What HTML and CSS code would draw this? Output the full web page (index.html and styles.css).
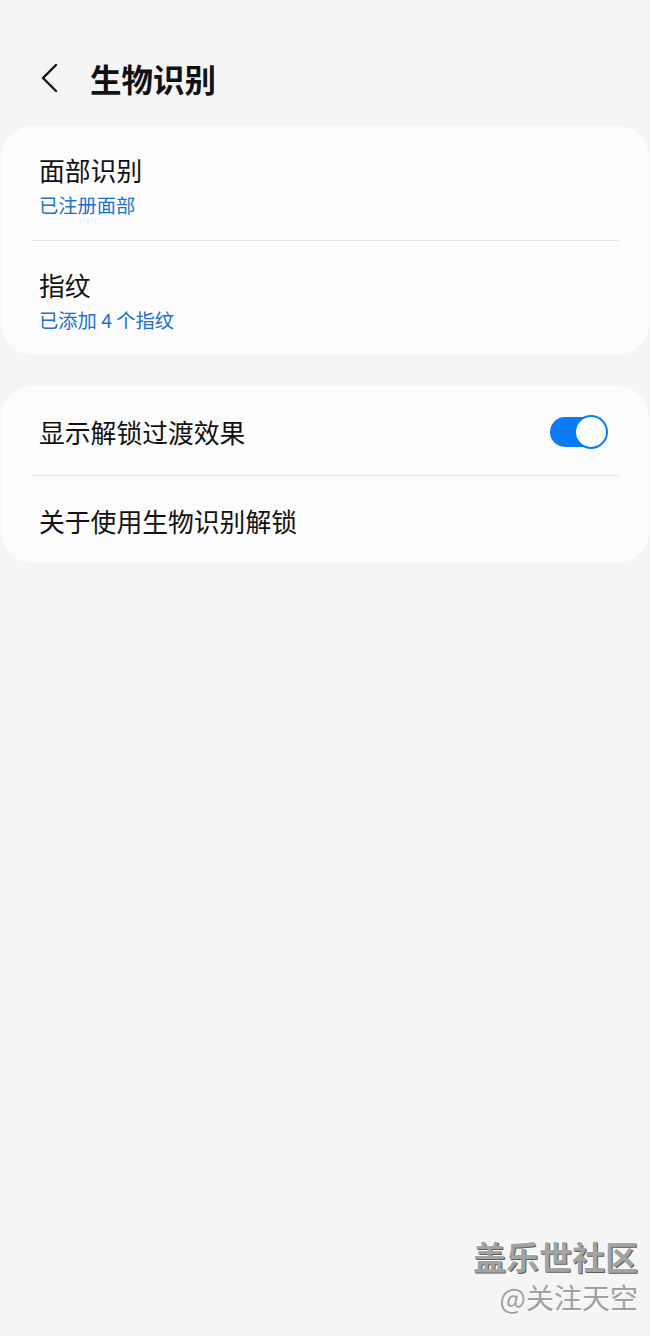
FILE: index.html
```html
<!DOCTYPE html>
<html lang="zh-CN">
<head>
    <meta charset="UTF-8">
    <meta name="viewport" content="width=device-width, initial-scale=1.0">
    <title>生物识别</title>
    <link rel="stylesheet" href="styles.css">
</head>
<body>
    <div class="page">
        <div class="header">
            <svg class="back" width="20" height="30" viewBox="0 0 20 30">
                <path d="M16 2 L3 15 L16 28" fill="none" stroke="#111" stroke-width="2.4" stroke-linecap="round" stroke-linejoin="round"/>
            </svg>
            <h1>生物识别</h1>
        </div>

        <div class="card">
            <div class="item">
                <div class="item-title">面部识别</div>
                <div class="item-sub">已注册面部</div>
            </div>
            <div class="divider"></div>
            <div class="item">
                <div class="item-title">指纹</div>
                <div class="item-sub">已添加 4 个指纹</div>
            </div>
        </div>

        <div class="card">
            <div class="row">
                <div class="item-title">显示解锁过渡效果</div>
                <div class="switch">
                    <div class="track"></div>
                    <div class="knob"></div>
                </div>
            </div>
            <div class="divider"></div>
            <div class="row row-last">
                <div class="item-title">关于使用生物识别解锁</div>
            </div>
        </div>

        <div class="watermark">
            <div class="wm-big">盖乐世社区</div>
            <div class="wm-small">@关注天空</div>
        </div>
    </div>
</body>
</html>
```

FILE: styles.css
```css
body {
    margin: 0;
    background-color: #f5f5f5;
    color: #111;
    font-family: "Noto Sans CJK SC", "Noto Sans", sans-serif;
}
.page {
    position: relative;
    min-height: 1336px;
    padding: 0 1px;
}
.header {
    height: 126px;
    display: flex;
    align-items: center;
    padding-left: 39px;
    padding-top: 30px;
    box-sizing: border-box;
}
.back {
    display: block;
}
h1 {
    margin: 0 0 0 30px;
    font-size: 31.5px;
    font-weight: 700;
    line-height: 40px;
}
.card {
    background-color: #fcfcfc;
    border-radius: 32px;
    margin-bottom: 31px;
}
.item {
    padding: 29px 38px 23px;
}
.item-title {
    font-size: 25.8px;
    line-height: 30px;
}
.item-sub {
    margin-top: 8px;
    font-size: 19.3px;
    line-height: 24px;
    color: #2271c9;
}
.divider {
    height: 1px;
    margin: 0 30px;
    background-color: #e3e3e3;
}
.row {
    height: 89px;
    display: flex;
    align-items: center;
    justify-content: space-between;
    padding: 3px 41px 0 38px;
    box-sizing: border-box;
}
.row-last {
    height: 87px;
}
.switch {
    position: relative;
    width: 58px;
    height: 34px;
}
.track {
    position: absolute;
    left: 0;
    top: 2px;
    width: 50px;
    height: 30px;
    border-radius: 15px;
    background-color: #0b7bf3;
}
.knob {
    position: absolute;
    right: 0;
    top: 0;
    width: 30px;
    height: 30px;
    border-radius: 50%;
    background-color: #fdfdfd;
    border: 2px solid #0b7bf3;
}
.watermark {
    position: absolute;
    right: 12px;
    top: 1234px;
    text-align: right;
}
.wm-big {
    font-size: 33px;
    font-weight: 700;
    line-height: 44px;
    color: #a3a3a3;
    text-shadow: 1px 1px 0 #5c5c5c, -1px -1px 0 #ffffff;
}
.wm-small {
    font-size: 28px;
    line-height: 38px;
    color: #a0a0a0;
    text-shadow: 1px 1px 0 #ffffff;
}
```
